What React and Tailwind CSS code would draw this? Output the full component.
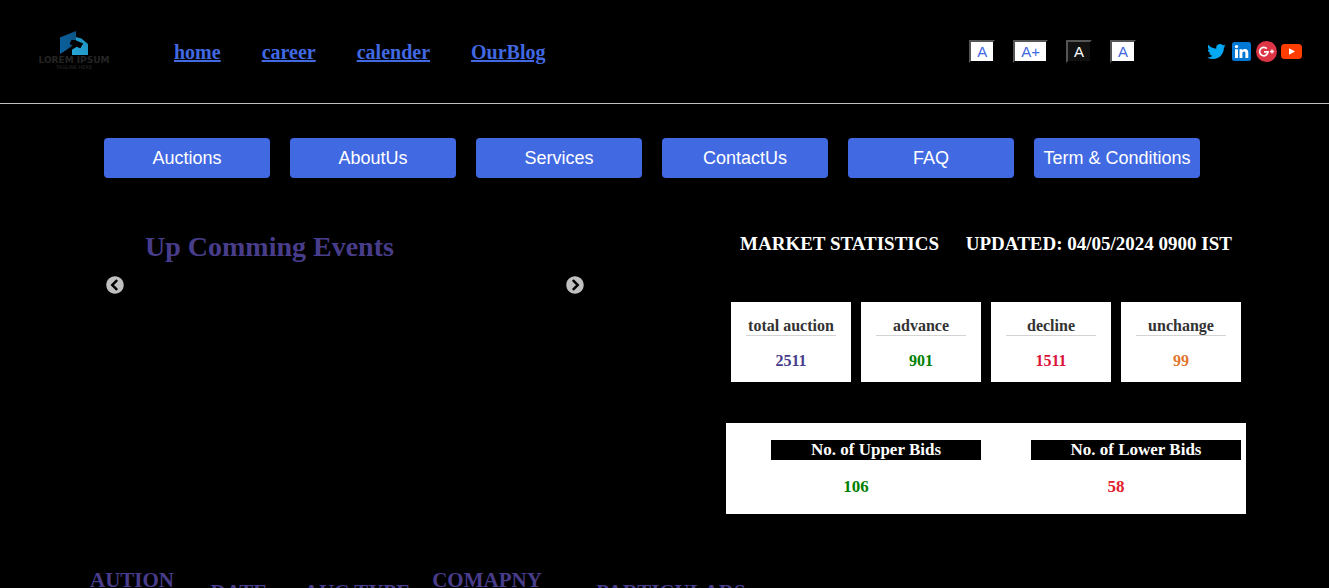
import React from "react";
import { FaChevronCircleLeft, FaChevronCircleRight } from "react-icons/fa";

const navLinks = ["home", "career", "calender", "OurBlog"];
const menu = ["Auctions", "AboutUs", "Services", "ContactUs", "FAQ", "Term & Conditions"];

const stats = [
  { label: "total auction", value: "2511", color: "text-[#483d8b]" },
  { label: "advance", value: "901", color: "text-[#008000]" },
  { label: "decline", value: "1511", color: "text-[#dc143c]" },
  { label: "unchange", value: "99", color: "text-[#e2762f]" },
];

const bids = [
  { label: "No. of Upper Bids", value: "106", color: "text-[#008000]" },
  { label: "No. of Lower Bids", value: "58", color: "text-[#e0202c]" },
];

const textButtons = [
  { text: "A", name: "Normal text", style: "bg-white text-[#4169e1]" },
  { text: "A+", name: "Larger text", style: "bg-white text-[#4169e1]" },
  { text: "A", name: "Dark theme", style: "bg-[#111111] text-white" },
  { text: "A", name: "Light theme", style: "bg-white text-[#4169e1]" },
];

function Logo() {
  return (
    <a href="#" className="flex w-[76px] shrink-0 flex-col items-center pb-1">
      <svg width="28" height="25" viewBox="0 0 28 25" aria-hidden="true">
        <defs>
          <linearGradient id="roof" x1="0" y1="0" x2="1" y2="0">
            <stop offset="0" stopColor="#0a5f9c" />
            <stop offset="1" stopColor="#0c5688" />
          </linearGradient>
          <linearGradient id="house" x1="0" y1="1" x2="1" y2="0">
            <stop offset="0" stopColor="#29a9d8" />
            <stop offset="1" stopColor="#1b8dbd" />
          </linearGradient>
        </defs>
        <path d="M0 6.500 16 0V9H11.500L9.800 13 14 15.500 0 23Z" fill="url(#roof)" />
        <path d="M16 6 21.500 7.500 28 13V24H12V18.500L16.500 15.500 20 17 23 12.500 16 9.500Z" fill="url(#house)" />
        <path d="M12 8.800 23 12.500 20.500 17 16.500 15.800 2 24.500 0 23.500 13 14.200 9.800 13Z" fill="#000" />
      </svg>
      <span className="font-['DejaVu_Sans',sans-serif] text-[9px] leading-[9px] font-bold whitespace-nowrap text-[#252525]">
        LOREM IPSUM
      </span>
      <span className="font-['DejaVu_Sans',sans-serif] text-[5px] leading-[4px] whitespace-nowrap text-[#292929]">
        TAGLINE HERE
      </span>
    </a>
  );
}

function SocialLinks() {
  return (
    <div className="flex items-center gap-1">
      <a href="#" aria-label="Twitter">
        <svg width="21" height="21" viewBox="0 0 48 48">
          <path
            fill="#03a9f4"
            d="M42 12.429a14.978 14.978 0 0 1-4.247 1.162 7.380 7.380 0 0 0 3.251-4.058 14.829 14.829 0 0 1-4.693 1.776A7.377 7.377 0 0 0 30.915 9c-4.080 0-7.387 3.278-7.387 7.320 0 .572.067 1.129.193 1.670a21.060 21.060 0 0 1-15.224-7.654 7.260 7.260 0 0 0-1 3.680c0 2.541 1.301 4.778 3.285 6.096a7.474 7.474 0 0 1-3.349-.914v.086c0 3.551 2.547 6.508 5.923 7.181a7.397 7.397 0 0 1-3.336.126c.942 2.901 3.661 5.023 6.892 5.086A14.922 14.922 0 0 1 6 34.714 21.060 21.060 0 0 0 17.321 38c13.585 0 21.017-11.156 21.017-20.834 0-.317-.010-.633-.025-.945A14.904 14.904 0 0 0 42 12.429"
            transform="translate(-4.500 -3.500) scale(1.180)"
          />
        </svg>
      </a>
      <a href="#" aria-label="LinkedIn">
        <svg width="21" height="21" viewBox="0 0 21 21">
          <rect x="1" y="1" width="19" height="19" rx="2.500" fill="#0078d4" />
          <circle cx="5.500" cy="5.600" r="1.700" fill="#fff" />
          <path
            fill="#fff"
            d="M4 8.300H7V17H4ZM8.500 8.300H11.300V9.500C11.800 8.700 12.700 8.100 14 8.100 16.300 8.100 17.300 9.600 17.300 12V17H14.400V12.500C14.400 11.300 14.100 10.600 13.100 10.600 12 10.600 11.400 11.300 11.400 12.500V17H8.500Z"
          />
        </svg>
      </a>
      <a href="#" aria-label="Google Plus">
        <svg width="21" height="21" viewBox="0 0 21 21">
          <circle cx="10.500" cy="10.500" r="10.500" fill="#dc3545" />
          <path
            fill="none"
            stroke="#fff"
            strokeWidth="1.700"
            d="M10.800 7.600A4.200 4.200 0 1 0 12 10.900H8"
          />
          <path fill="none" stroke="#fff" strokeWidth="1.300" d="M14 10.500H18M16 8.500V12.500" />
        </svg>
      </a>
      <a href="#" aria-label="YouTube">
        <svg width="21" height="21" viewBox="0 0 21 21">
          <rect x="0" y="3" width="21" height="15" rx="3.500" fill="#ff3d00" />
          <path d="M8 7.200 14 10.500 8 13.800Z" fill="#fff" />
        </svg>
      </a>
    </div>
  );
}

export default function App() {
  return (
    <div className="h-screen overflow-hidden bg-black font-['Liberation_Serif',serif] text-white">
      <header className="flex h-[104px] items-center border-b border-[#c0c0c0] pr-[27px] pl-9">
        <Logo />
        <nav className="ml-[62px] flex gap-[41px]">
          {navLinks.map((link) => (
            <a key={link} href="#" className="text-[20px] leading-6 font-bold text-[#4169e1] underline">
              {link}
            </a>
          ))}
        </nav>
        <div className="mr-[70px] ml-auto flex gap-[18px]">
          {textButtons.map((b) => (
            <button
              key={b.name}
              aria-label={b.name}
              className={
                "border-2 border-t-[#555] border-r-black border-b-black border-l-[#555] px-1.5 font-['Liberation_Sans',sans-serif] text-[15px] leading-[19px] " +
                b.style
              }
            >
              {b.text}
            </button>
          ))}
        </div>
        <SocialLinks />
      </header>

      <div className="mt-[34px] grid grid-cols-6 gap-5 pr-[129px] pl-[104px]">
        {menu.map((item) => (
          <button
            key={item}
            className="h-10 rounded bg-[#4169e1] font-['Liberation_Sans',sans-serif] text-lg whitespace-nowrap text-white"
          >
            {item}
          </button>
        ))}
      </div>

      <main className="flex justify-between pt-[51px] pr-[83px] pl-[106px]">
        <section className="w-[478px]">
          <h1 className="pl-[39px] text-[28px] leading-9 font-bold text-[#483d8b]">Up Comming Events</h1>
          <div className="mt-[11px] flex justify-between text-[#c0c0c0]">
            <button aria-label="Previous event">
              <FaChevronCircleLeft size={18} />
            </button>
            <button aria-label="Next event">
              <FaChevronCircleRight size={18} />
            </button>
          </div>
        </section>

        <section className="w-[520px] pt-[3px]">
          <h2 className="flex justify-between pr-3.5 pl-3.5 text-[19px] leading-6 font-bold whitespace-nowrap">
            <span>MARKET STATISTICS</span>
            <span>UPDATED: 04/05/2024 0900 IST</span>
          </h2>
          <div className="mt-[46px] grid grid-cols-4 gap-2.5 px-[5px] text-center text-base font-bold">
            {stats.map((s) => (
              <div key={s.label} className="h-20 bg-white px-[15px] pt-[15px]">
                <div className="border-b border-[#d3d3d3] leading-[18px] whitespace-nowrap text-[#333]">
                  {s.label}
                </div>
                <div className={"mt-4 leading-[18px] " + s.color}>{s.value}</div>
              </div>
            ))}
          </div>
          <div className="mt-[41px] grid h-[91px] grid-cols-2 bg-white pt-[17px] text-center text-[17px] leading-5 font-bold">
            {bids.map((b) => (
              <div key={b.label}>
                <div className="mr-[5px] ml-[45px] bg-black text-white">{b.label}</div>
                <div className={"mt-[17px] " + b.color}>{b.value}</div>
              </div>
            ))}
          </div>
        </section>
      </main>

      <table className="mt-[54px] ml-20 table-fixed text-center text-[21px] leading-6 whitespace-nowrap text-[#483d8b]">
        <thead>
          <tr className="align-top">
            <th className="w-[104px]">AUTION</th>
            <th className="w-[110px] pt-3">DATE</th>
            <th className="w-[126px] pt-3">AUC TYPE</th>
            <th className="w-[134px]">COMAPNY</th>
            <th className="w-[234px] pt-3">PARTICULARS</th>
          </tr>
        </thead>
      </table>
    </div>
  );
}
